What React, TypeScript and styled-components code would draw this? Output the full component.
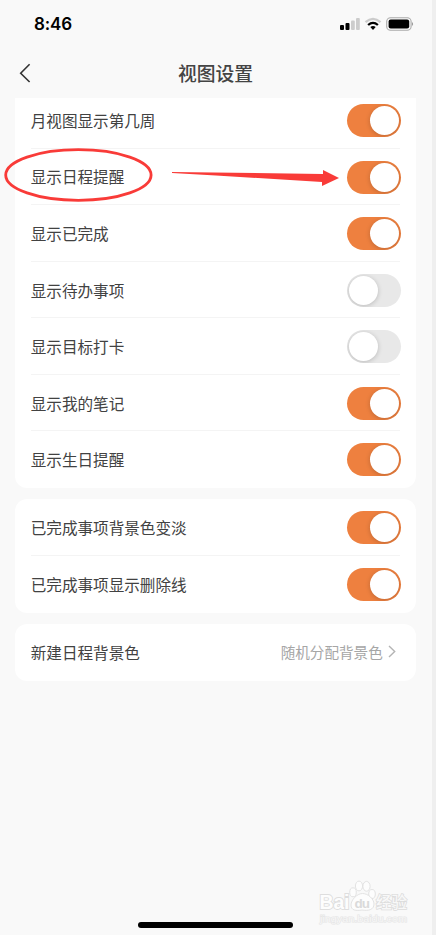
import React, { useState } from "react";
import styled, { createGlobalStyle } from "styled-components";

const GlobalStyle = createGlobalStyle`
  * { box-sizing: border-box; }
  body { margin: 0; background: #f9f9f9; overflow: hidden; }
`;

const Screen = styled.main`
  position: relative;
  display: flex;
  flex-direction: column;
  width: 436px;
  height: 935px;
  overflow: hidden;
  background: #f9f9f9;
  border-right: 4px solid #efefef;
  color: #424242;
  font-family: "Noto Sans CJK SC", sans-serif;
`;

const StatusBar = styled.header`
  display: flex;
  align-items: center;
  justify-content: space-between;
  flex: none;
  height: 48px;
  padding: 0 18px 0 34px;
`;

const Clock = styled.time`
  font: 600 17px/20px Inter, sans-serif;
  letter-spacing: -0.1px;
  color: #000;
`;

const StatusIcons = styled.svg`
  display: block;
  width: 75px;
  height: 16px;
`;

const NavBar = styled.nav`
  display: grid;
  grid-template-columns: 50px 1fr 51px;
  align-items: center;
  flex: none;
  height: 50px;
`;

const BackButton = styled.button`
  display: flex;
  padding: 0 0 0 18px;
  border: 0;
  background: none;
  color: #333;
`;

const Title = styled.h1`
  margin: 0;
  font-size: 18.8px;
  line-height: 28px;
  font-weight: 500;
  text-align: center;
  color: #444;
`;

const ScrollArea = styled.div`
  flex: 1;
  min-height: 0;
  margin-top: 0.4px;
  padding: 0 15.7px 0 14.7px;
  overflow: hidden;
`;

const List = styled.div`
  display: flex;
  flex-direction: column;
  gap: 11.4px;
  margin-top: -6.3px;
`;

const Card = styled.section<{ $continued?: boolean }>`
  padding: 0 16px;
  border-radius: ${(p) => (p.$continued ? "0 0 12px 12px" : "12px")};
  background: #fff;
`;

const Row = styled.div`
  display: flex;
  align-items: center;
  justify-content: space-between;
  height: 56.57px;
  border-bottom: 1px solid #f4f4f4;

  &:last-child { border-bottom-color: transparent; }
`;

const Label = styled.span`
  font-size: 15.6px;
  line-height: 24px;
`;

const Value = styled.span`
  display: flex;
  align-items: center;
  gap: 5.5px;
  margin-right: 4px;
  font-size: 14.6px;
  line-height: 22px;
  color: #a6a6a6;
`;

const Track = styled.button<{ $on: boolean }>`
  display: flex;
  align-items: center;
  justify-content: ${(p) => (p.$on ? "flex-end" : "flex-start")};
  flex: none;
  width: 54px;
  height: 33px;
  margin: 1.2px -1px 0 0;
  padding: 0 2px;
  border: 0;
  border-radius: 17px;
  overflow: hidden;
  background: ${(p) => (p.$on ? "#ee803f" : "#e8e8e8")};
`;

const Knob = styled.span`
  width: 29px;
  height: 29px;
  border-radius: 50%;
  background: #fff;
  box-shadow: 0 1px 5px rgba(0, 0, 0, 0.2);
`;

const Annotation = styled.svg`
  position: absolute;
  left: 0;
  top: 140px;
  width: 350px;
  height: 70px;
  pointer-events: none;
`;

const HomeIndicator = styled.div`
  position: absolute;
  left: 138px;
  bottom: 7px;
  width: 155px;
  height: 6px;
  border-radius: 3px;
  background: #000;
`;

const Watermark = styled.svg`
  position: absolute;
  left: 314px;
  top: 876px;
  width: 100px;
  height: 52px;
`;

const viewOptions = [
  { label: "月视图显示第几周", on: true },
  { label: "显示日程提醒", on: true },
  { label: "显示已完成", on: true },
  { label: "显示待办事项", on: false },
  { label: "显示目标打卡", on: false },
  { label: "显示我的笔记", on: true },
  { label: "显示生日提醒", on: true },
];

const completedOptions = [
  { label: "已完成事项背景色变淡", on: true },
  { label: "已完成事项显示删除线", on: true },
];

function SwitchRow({ label, on }: { label: string; on: boolean }) {
  const [checked, setChecked] = useState(on);
  return (
    <Row>
      <Label>{label}</Label>
      <Track
        $on={checked}
        role="switch"
        aria-checked={checked}
        aria-label={label}
        onClick={() => setChecked(!checked)}
      >
        <Knob />
      </Track>
    </Row>
  );
}

function DeviceStatus() {
  return (
    <StatusIcons viewBox="0 0 75 16" aria-hidden="true">
      <rect x="1" y="9" width="4" height="5" rx="1" />
      <rect x="6.5" y="7" width="4" height="7" rx="1" />
      <rect x="12" y="4.5" width="3.8" height="9.5" rx="1" fill="#ccc" />
      <rect x="17" y="2" width="3.8" height="12" rx="1" fill="#ccc" />
      <g fill="none" strokeWidth="2.3">
        <path d="M26.5 6.2Q34 -0.5 41.5 6.2" stroke="#ccc" />
        <path d="M29.1 9Q34 4.7 38.9 9" stroke="#000" />
      </g>
      <path d="M31.3 11.1Q34 9 36.7 11.1L34 14Z" />
      <rect x="47.7" y="1.7" width="24.4" height="12.6" rx="3.8" fill="none" stroke="#aaa" strokeWidth="1.1" />
      <rect x="49.6" y="3.5" width="20.6" height="9" rx="2.1" />
      <path d="M73 6Q75.2 8 73 10Z" fill="#999" />
    </StatusIcons>
  );
}

export default function App() {
  return (
    <>
      <GlobalStyle />
      <Screen>
        <StatusBar>
          <Clock>8:46</Clock>
          <DeviceStatus />
        </StatusBar>
        <NavBar>
          <BackButton aria-label="返回">
            <svg width="14" height="20" viewBox="0 0 14 20" fill="none" stroke="currentColor" strokeWidth="1.6">
              <path d="M11.6 1.2L2.7 10.2L11.6 19" />
            </svg>
          </BackButton>
          <Title>视图设置</Title>
        </NavBar>
        <ScrollArea>
          <List>
            <Card $continued>
              {viewOptions.map((item) => <SwitchRow key={item.label} {...item} />)}
            </Card>
            <Card>
              {completedOptions.map((item) => <SwitchRow key={item.label} {...item} />)}
            </Card>
            <Card>
              <Row>
                <Label>新建日程背景色</Label>
                <Value>
                  随机分配背景色
                  <svg width="8" height="13" viewBox="0 0 8 13" fill="none" stroke="#b4b4b4" strokeWidth="1.4">
                    <path d="M1 1L6.7 6.5L1 12" />
                  </svg>
                </Value>
              </Row>
            </Card>
          </List>
        </ScrollArea>
        <Annotation viewBox="0 140 350 70" aria-hidden="true">
          <ellipse cx="78.4" cy="175" rx="72.7" ry="25.3" fill="none" stroke="#f93b38" strokeWidth="2.8" />
          <path d="M172 172L323 174V170L339 178L322 186V182L216 175.5L172 173Z" fill="#f93b38" />
        </Annotation>
        <Watermark viewBox="314 876 100 52" aria-hidden="true">
          <g fill="#fdfdfd" stroke="#e3e3e3" strokeWidth="1">
            <ellipse cx="353" cy="892.3" rx="3.3" ry="4.5" />
            <ellipse cx="359" cy="886" rx="3.6" ry="4.9" />
            <ellipse cx="366.5" cy="886.3" rx="3.6" ry="4.9" />
            <ellipse cx="372" cy="894" rx="3.3" ry="4.5" />
            <path d="M362.5 893.5C357 893.5 351 900 351 905C351 910.5 356 911 362 910C368 911 374 910 374 904C374 899 368 893.5 362.5 893.5Z" />
          </g>
          <text x="319.5" y="908.5" fill="#fdfdfd" stroke="#dedede" strokeWidth="1.8" paintOrder="stroke" fontFamily="Liberation Sans, sans-serif" fontWeight="700" fontSize="19.5" textLength="30">Bai</text>
          <text x="354.5" y="907.5" fill="#dadada" fontFamily="Liberation Sans, sans-serif" fontWeight="700" fontSize="13.5" textLength="15.5">du</text>
          <text x="376" y="907.5" fill="#f8f8f8" stroke="#dcdcdc" strokeWidth="1.5" paintOrder="stroke" fontFamily="Noto Sans CJK SC, sans-serif" fontWeight="500" fontSize="15.6" textLength="31">经验</text>
          <text x="320" y="921.5" fill="#f6f6f6" stroke="#e6e6e6" strokeWidth="1.2" paintOrder="stroke" fontFamily="Liberation Sans, sans-serif" fontSize="9.6" textLength="87" lengthAdjust="spacingAndGlyphs">jingyan.baidu.com</text>
        </Watermark>
        <HomeIndicator />
      </Screen>
    </>
  );
}
